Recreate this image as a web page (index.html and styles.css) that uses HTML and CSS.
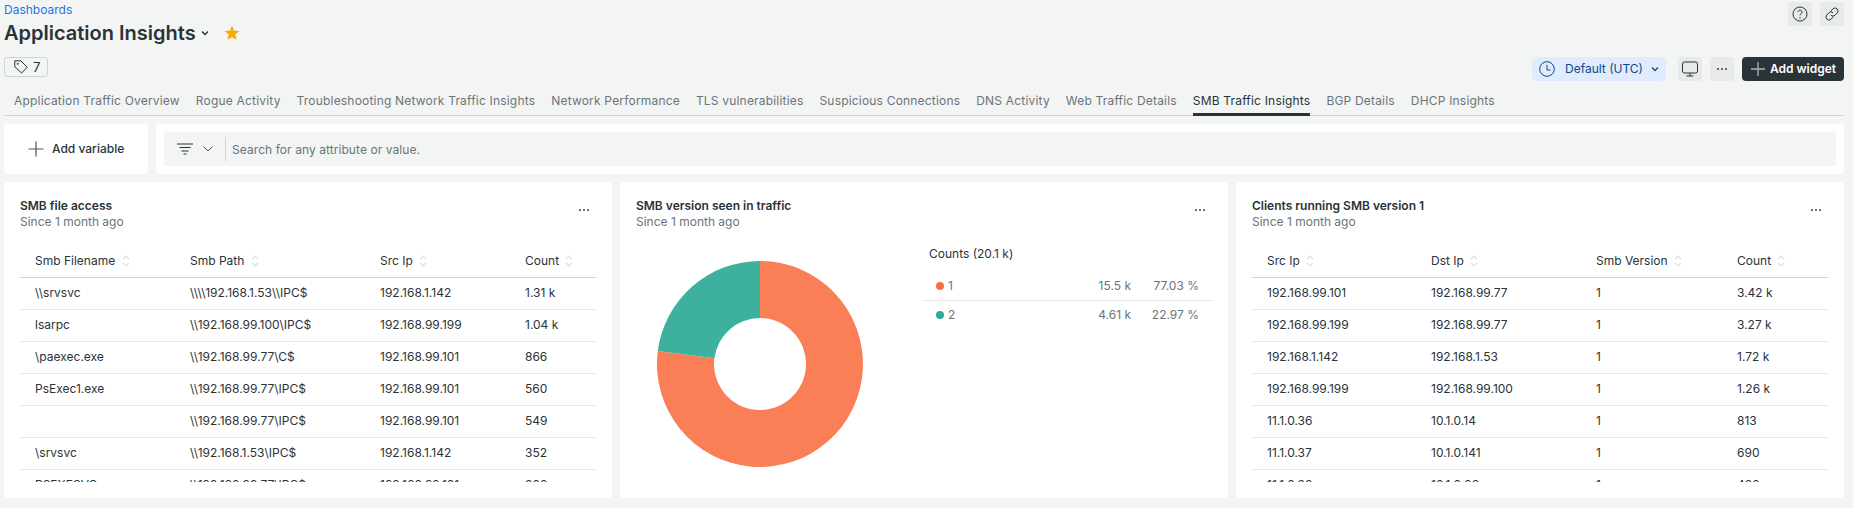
FILE: index.html
```html
<!DOCTYPE html>
<html lang="en">
<head>
    <meta charset="UTF-8">
    <title>Application Insights</title>
    <link rel="stylesheet" href="styles.css">
</head>
<body>
    <svg class="defs" width="0" height="0">
        <symbol id="sort" viewBox="0 0 8 14">
            <path d="M1 5l3-3 3 3M1 9l3 3 3-3" fill="none" stroke="#dcdfdf" stroke-width="1.200"/>
        </symbol>
        <symbol id="dots" viewBox="0 0 24 24">
            <circle cx="8" cy="12" r=".95" fill="#293338"/>
            <circle cx="12" cy="12" r=".95" fill="#293338"/>
            <circle cx="16" cy="12" r=".95" fill="#293338"/>
        </symbol>
    </svg>

    <header class="head-top">
        <div>
            <a class="crumb">Dashboards</a>
            <div class="title-row">
                <h1>Application Insights</h1>
                <svg class="title-caret" width="8" height="6" viewBox="0 0 8 6"><path d="M1 1.500l3 3 3-3" fill="none" stroke="#293338" stroke-width="1.400"/></svg>
                <svg class="star" width="16" height="16" viewBox="0 0 17 17"><path d="M8.500.8l2.200 5.300 5.700.4-4.400 3.700 1.400 5.600-4.900-3-4.900 3 1.400-5.600L.6 6.500l5.700-.4z" fill="#f5ab00"/></svg>
            </div>
        </div>
        <div class="top-icons">
            <button class="icon-btn">
                <svg width="16" height="16" viewBox="0 0 16 16" fill="none" stroke="#293338"><circle cx="8" cy="8" r="7"/><path d="M5.900 6.200c0-1.200 1-2 2.100-2s2.100.8 2.100 1.900c0 1.600-2.100 1.700-2.100 3.300"/><path d="M8 11v1.300"/></svg>
            </button>
            <button class="icon-btn">
                <svg width="16" height="16" viewBox="0 0 16 16" fill="none" stroke="#293338"><path d="M6.800 5.200l2.400-2.600a3 3 0 0 1 4.200 4.200l-2.300 2.400a3 3 0 0 1-4.200 0"/><path d="M9.200 10.800l-2.400 2.600a3 3 0 0 1-4.200-4.200l2.300-2.400a3 3 0 0 1 4.200 0"/></svg>
            </button>
        </div>
    </header>

    <div class="head-actions">
        <span class="tag">
            <svg width="14" height="14" viewBox="0 0 14 14" fill="none" stroke="#293338"><path d="M.8.800h6l6.400 6.400-5.600 5.800L.8 6.800z"/><circle cx="3.800" cy="3.800" r=".6"/></svg>
            7
        </span>
        <div class="actions">
            <button class="tz-btn">
                <svg width="16" height="16" viewBox="0 0 16 16" fill="none" stroke="#0c4a8c"><circle cx="8" cy="8" r="7.300"/><path d="M8 3.800V9h3.500"/></svg>
                Default (UTC)
                <svg class="tz-caret" width="8" height="6" viewBox="0 0 8 6"><path d="M1 1.500l3 3 3-3" fill="none" stroke="#0c4a8c" stroke-width="1.300"/></svg>
            </button>
            <button class="icon-btn">
                <svg width="18" height="18" viewBox="0 0 18 18" fill="none" stroke="#293338"><rect x="1.500" y="2" width="15" height="11" rx="2"/><path d="M9 13v3M5.500 16h7"/></svg>
            </button>
            <button class="icon-btn"><svg width="24" height="24"><use href="#dots"/></svg></button>
            <button class="add-widget">
                <svg width="14" height="14" viewBox="0 0 14 14" stroke="#aeb4b6" stroke-width="1.300"><path d="M7 0v14M0 7h14"/></svg>
                Add widget
            </button>
        </div>
    </div>

    <nav class="tabs">
        <a class="tab">Application Traffic Overview</a>
        <a class="tab">Rogue Activity</a>
        <a class="tab">Troubleshooting Network Traffic Insights</a>
        <a class="tab">Network Performance</a>
        <a class="tab">TLS vulnerabilities</a>
        <a class="tab">Suspicious Connections</a>
        <a class="tab">DNS Activity</a>
        <a class="tab">Web Traffic Details</a>
        <a class="tab active">SMB Traffic Insights</a>
        <a class="tab">BGP Details</a>
        <a class="tab">DHCP Insights</a>
    </nav>

    <div class="var-row">
        <button class="add-var">
            <svg width="16" height="16" viewBox="0 0 16 16" stroke="#4a5358" stroke-width="1.200"><path d="M8 .5v15M.5 8h15"/></svg>
            Add variable
        </button>
        <div class="filter-box">
            <div class="filter-bar">
                <svg class="filter-icon" width="16" height="12" viewBox="0 0 16 12" stroke="#293338"><path d="M0 1h16M2.500 4.500h11M4.500 8h7M6.500 11h3"/></svg>
                <svg class="filter-caret" width="10" height="6" viewBox="0 0 10 6"><path d="M.7.700L5 5l4.300-4.300" fill="none" stroke="#4a5358"/></svg>
                <span class="filter-sep"></span>
                <span class="filter-text">Search for any attribute or value.</span>
            </div>
        </div>
    </div>

    <main class="widgets">
        <section class="card">
            <div class="card-head">
                <div>
                    <h2>SMB file access</h2>
                    <p>Since 1 month ago</p>
                </div>
                <svg class="more" width="24" height="24"><use href="#dots"/></svg>
            </div>
            <div class="table-wrap">
                <table class="files">
                    <thead>
                        <tr>
                            <th>Smb Filename <svg class="sort"><use href="#sort"/></svg></th>
                            <th>Smb Path <svg class="sort"><use href="#sort"/></svg></th>
                            <th>Src Ip <svg class="sort"><use href="#sort"/></svg></th>
                            <th>Count <svg class="sort"><use href="#sort"/></svg></th>
                        </tr>
                    </thead>
                    <tbody>
                        <tr><td>\\srvsvc</td><td>\\\\192.168.1.53\\IPC$</td><td>192.168.1.142</td><td>1.31 k</td></tr>
                        <tr><td>lsarpc</td><td>\\192.168.99.100\IPC$</td><td>192.168.99.199</td><td>1.04 k</td></tr>
                        <tr><td>\paexec.exe</td><td>\\192.168.99.77\C$</td><td>192.168.99.101</td><td>866</td></tr>
                        <tr><td>PsExec1.exe</td><td>\\192.168.99.77\IPC$</td><td>192.168.99.101</td><td>560</td></tr>
                        <tr><td></td><td>\\192.168.99.77\IPC$</td><td>192.168.99.101</td><td>549</td></tr>
                        <tr><td>\srvsvc</td><td>\\192.168.1.53\IPC$</td><td>192.168.1.142</td><td>352</td></tr>
                        <tr><td>PSEXESVC</td><td>\\192.168.99.77\IPC$</td><td>192.168.99.101</td><td>300</td></tr>
                    </tbody>
                </table>
            </div>
        </section>

        <section class="card">
            <div class="card-head">
                <div>
                    <h2>SMB version seen in traffic</h2>
                    <p>Since 1 month ago</p>
                </div>
                <svg class="more" width="24" height="24"><use href="#dots"/></svg>
            </div>
            <div class="chart-body">
                <svg class="donut" width="288" height="268" viewBox="0 0 288 268">
                    <path d="M124 31A103 103 0 1 1 21.800 120.900L78.400 128.150A46 46 0 1 0 124 88Z" fill="#fa7f57"/>
                    <path d="M124 31A103 103 0 0 0 21.800 120.900L78.400 128.150A46 46 0 0 1 124 88Z" fill="#3eb19e"/>
                </svg>
                <div class="legend">
                    <div class="legend-title">Counts (20.1 k)</div>
                    <div class="legend-row">
                        <span class="dot orange"></span>
                        <span class="legend-name">1</span>
                        <span class="legend-val">15.5 k</span>
                        <span class="legend-pct">77.03 %</span>
                    </div>
                    <div class="legend-row">
                        <span class="dot teal"></span>
                        <span class="legend-name">2</span>
                        <span class="legend-val">4.61 k</span>
                        <span class="legend-pct">22.97 %</span>
                    </div>
                </div>
            </div>
        </section>

        <section class="card">
            <div class="card-head">
                <div>
                    <h2>Clients running SMB version 1</h2>
                    <p>Since 1 month ago</p>
                </div>
                <svg class="more" width="24" height="24"><use href="#dots"/></svg>
            </div>
            <div class="table-wrap">
                <table class="clients">
                    <thead>
                        <tr>
                            <th>Src Ip <svg class="sort"><use href="#sort"/></svg></th>
                            <th>Dst Ip <svg class="sort"><use href="#sort"/></svg></th>
                            <th>Smb Version <svg class="sort"><use href="#sort"/></svg></th>
                            <th>Count <svg class="sort"><use href="#sort"/></svg></th>
                        </tr>
                    </thead>
                    <tbody>
                        <tr><td>192.168.99.101</td><td>192.168.99.77</td><td>1</td><td>3.42 k</td></tr>
                        <tr><td>192.168.99.199</td><td>192.168.99.77</td><td>1</td><td>3.27 k</td></tr>
                        <tr><td>192.168.1.142</td><td>192.168.1.53</td><td>1</td><td>1.72 k</td></tr>
                        <tr><td>192.168.99.199</td><td>192.168.99.100</td><td>1</td><td>1.26 k</td></tr>
                        <tr><td>11.1.0.36</td><td>10.1.0.14</td><td>1</td><td>813</td></tr>
                        <tr><td>11.1.0.37</td><td>10.1.0.141</td><td>1</td><td>690</td></tr>
                        <tr><td>11.1.0.38</td><td>10.1.0.93</td><td>1</td><td>438</td></tr>
                    </tbody>
                </table>
            </div>
        </section>
    </main>
</body>
</html>
```

FILE: styles.css
```css
* {
    box-sizing: border-box;
}

html, body {
    height: 100%;
}

body {
    margin: 0;
    padding: 2px 9px 0 4px;
    overflow: hidden;
    background-color: #f3f5f4;
    color: #293338;
    font-family: Inter, "Liberation Sans", sans-serif;
    font-size: 12px;
    line-height: 16px;
}

button {
    font: inherit;
    color: inherit;
    border: none;
    padding: 0;
    cursor: pointer;
}

.defs {
    position: absolute;
}

/* header */
.head-top {
    display: flex;
    justify-content: space-between;
    height: 55px;
}

.crumb {
    display: block;
    color: #1d75e0;
}

.title-row {
    display: flex;
    align-items: center;
    height: 30px;
}

h1 {
    margin: 0;
    font-size: 20px;
    line-height: 30px;
    font-weight: 600;
}

.title-caret {
    margin-left: 5px;
}

.star {
    margin-left: 15px;
}

.top-icons, .actions {
    display: flex;
    align-items: center;
    gap: 8px;
}

.top-icons {
    align-items: flex-start;
}

.icon-btn {
    display: flex;
    align-items: center;
    justify-content: center;
    width: 24px;
    height: 24px;
    border-radius: 3px;
    background-color: #e8eaea;
}

.head-actions {
    display: flex;
    justify-content: space-between;
    height: 24px;
}

.tag {
    display: flex;
    align-items: center;
    gap: 5px;
    width: 44px;
    height: 20px;
    padding-left: 9px;
    border: 1px solid #cfd3d3;
    border-radius: 3px;
    font-size: 13px;
}

.tz-btn {
    display: flex;
    align-items: center;
    width: 134px;
    height: 24px;
    margin-right: 4px;
    padding-left: 7px;
    border-radius: 4px;
    background-color: #e0ecfd;
    color: #0c4a8c;
}

.tz-btn svg:first-child {
    margin-right: 10px;
}

.tz-caret {
    margin-left: 8px;
}

.add-widget {
    display: flex;
    align-items: center;
    gap: 5px;
    width: 102px;
    height: 24px;
    padding-left: 9px;
    border-radius: 4px;
    background-color: #293338;
    color: #fff;
    font-weight: 600;
}

/* tabs */
.tabs {
    display: flex;
    gap: 16px;
    height: 35px;
    padding-left: 10px;
    border-bottom: 1px solid #cfd3d3;
}

.tab {
    height: 35px;
    padding-top: 12px;
    border-bottom: 3px solid transparent;
    color: #6b7478;
    letter-spacing: .19px;
    white-space: nowrap;
}

.tab.active {
    color: #293338;
    border-bottom-color: #293338;
}

/* variable bar */
.var-row {
    display: flex;
    gap: 8px;
    height: 50px;
    margin-top: 8px;
}

.add-var {
    display: flex;
    align-items: center;
    gap: 8px;
    width: 144px;
    padding-left: 24px;
    border-radius: 4px;
    background-color: #fff;
    font-weight: 500;
}

.filter-box {
    flex: 1;
    padding: 8px;
    border-radius: 4px;
    background-color: #fff;
}

.filter-bar {
    display: flex;
    align-items: center;
    height: 34px;
    padding-left: 13px;
    border-radius: 3px;
    background-color: #f3f5f4;
    color: #6b7478;
}

.filter-caret {
    margin-left: 10px;
}

.filter-sep {
    width: 1px;
    height: 24px;
    margin: 0 6px 0 12px;
    background-color: #cfd3d3;
}

.filter-text {
    padding-top: 2px;
    letter-spacing: .07px;
}

/* widgets */
.widgets {
    display: grid;
    grid-template-columns: repeat(3, 1fr);
    gap: 8px;
    height: 316px;
    margin-top: 8px;
}

.card {
    padding: 16px 16px 0;
    border-radius: 4px;
    background-color: #fff;
}

.card-head {
    display: flex;
    justify-content: space-between;
    height: 32px;
}

h2 {
    margin: 0;
    font-size: 12px;
    font-weight: 600;
}

.card-head p {
    margin: 0;
    color: #6b7478;
}

.table-wrap {
    height: 237px;
    margin-top: 15px;
    overflow: hidden;
}

table {
    width: 576px;
    table-layout: fixed;
    border-collapse: collapse;
}

.files th:nth-child(1) { width: 155px; }
.files th:nth-child(2) { width: 190px; }
.files th:nth-child(3) { width: 145px; }

.clients th:nth-child(1) { width: 164px; }
.clients th:nth-child(2) { width: 165px; }
.clients th:nth-child(3) { width: 141px; }

th, td {
    height: 32px;
    padding: 0 0 0 15px;
    text-align: left;
    font-weight: 400;
    white-space: nowrap;
    border-bottom: 1px solid #e7e9e9;
}

th {
    border-bottom-color: #cfd3d3;
}

.sort {
    width: 8px;
    height: 14px;
    margin-left: 3px;
    vertical-align: -3px;
}

/* pie */
.chart-body {
    display: flex;
}

.donut {
    flex: none;
}

.legend {
    flex: 1;
    padding-top: 16px;
}

.legend-title {
    height: 26px;
    padding-left: 5px;
}

.legend-row {
    display: flex;
    align-items: center;
    height: 28px;
    padding-left: 12px;
    color: #6b7478;
}

.legend-row + .legend-row {
    border-top: 1px solid #e7e9e9;
}

.dot {
    width: 8px;
    height: 8px;
    margin-right: 4px;
    border-radius: 50%;
}

.orange {
    background-color: #f96f42;
}

.teal {
    background-color: #2fa992;
}

.legend-name {
    flex: 1;
}

.legend-val {
    width: 60px;
    text-align: right;
}

.legend-pct {
    width: 81px;
    padding-right: 13px;
    text-align: right;
}
```
